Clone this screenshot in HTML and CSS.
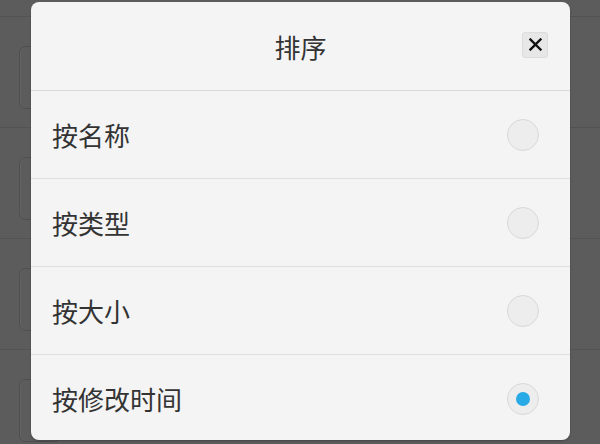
FILE: index.html
```html
<!DOCTYPE html>
<html lang="zh-CN">
<head>
<meta charset="utf-8">
<title>排序</title>
<link rel="stylesheet" href="styles.css">
</head>
<body>
<div class="screen">
  <div class="bg-list">
    <div class="bg-row"><div class="bg-card"></div></div>
    <div class="bg-row"><div class="bg-card"></div></div>
    <div class="bg-row"><div class="bg-card"></div></div>
    <div class="bg-row"><div class="bg-card"></div></div>
  </div>
  <div class="dialog">
    <div class="header">
      <span></span>
      <div class="title">排序</div>
      <button class="close" aria-label="关闭">
        <svg width="13" height="13" viewBox="0 0 13 13"><path d="M1.5 1.5 L11.5 11.5 M11.5 1.5 L1.5 11.5" stroke="#111" stroke-width="2.4" stroke-linecap="square" fill="none"/></svg>
      </button>
    </div>
    <div class="option"><span class="label">按名称</span><span class="radio"></span></div>
    <div class="option"><span class="label">按类型</span><span class="radio"></span></div>
    <div class="option"><span class="label">按大小</span><span class="radio"></span></div>
    <div class="option last"><span class="label">按修改时间</span><span class="radio checked"></span></div>
  </div>
</div>
</body>
</html>
```
FILE: styles.css
```css
html, body {
  margin: 0;
  padding: 0;
}
body {
  width: 600px;
  height: 444px;
  overflow: hidden;
  background: #5c5c5c;
  font-family: "Noto Sans CJK SC", "Noto Sans", sans-serif;
}
.screen {
  position: relative;
  width: 600px;
  height: 444px;
  overflow: hidden;
}
.bg-list {
  padding-top: 16px;
}
.bg-row {
  height: 111px;
  border-top: 1px solid #535353;
  padding-top: 29px;
  padding-left: 19px;
  box-sizing: border-box;
}
.bg-card {
  width: 40px;
  height: 61px;
  border: 1px solid #4f4f4f;
  border-radius: 7px;
  box-shadow: inset 1px 0 0 #646464;
}
.dialog {
  position: absolute;
  left: 31px;
  top: 2px;
  width: 539px;
  height: 438px;
  background: #f4f4f4;
  border-radius: 8px;
  overflow: hidden;
  box-shadow: 0 1px 2px rgba(0,0,0,0.25);
}
.header {
  height: 88px;
  border-bottom: 1px solid #d9d9d9;
  display: grid;
  grid-template-columns: 1fr auto 1fr;
  align-items: center;
}
.title {
  font-size: 26px;
  color: #333;
  line-height: 1;
  padding-top: 1px;
}
.close {
  justify-self: end;
  margin-right: 22px;
  margin-bottom: 3px;
  width: 26px;
  height: 26px;
  padding: 0;
  border: 1px solid #dcdcdc;
  border-radius: 3px;
  background: #e7e7e7;
  display: flex;
  align-items: center;
  justify-content: center;
}
.close svg {
  display: block;
}
.option {
  height: 87px;
  border-bottom: 1px solid #dfdfdf;
  display: flex;
  align-items: center;
  justify-content: space-between;
  padding: 0 31px 0 21px;
}
.option.last {
  border-bottom: none;
}
.label {
  font-size: 26px;
  color: #333;
  line-height: 1;
}
.radio {
  width: 32px;
  height: 32px;
  box-sizing: border-box;
  border: 1px solid #d8d8d8;
  border-radius: 50%;
  background: #ededed;
  display: flex;
  align-items: center;
  justify-content: center;
}
.radio.checked::after {
  content: "";
  width: 14px;
  height: 14px;
  border-radius: 50%;
  background: #27aae6;
}
```
